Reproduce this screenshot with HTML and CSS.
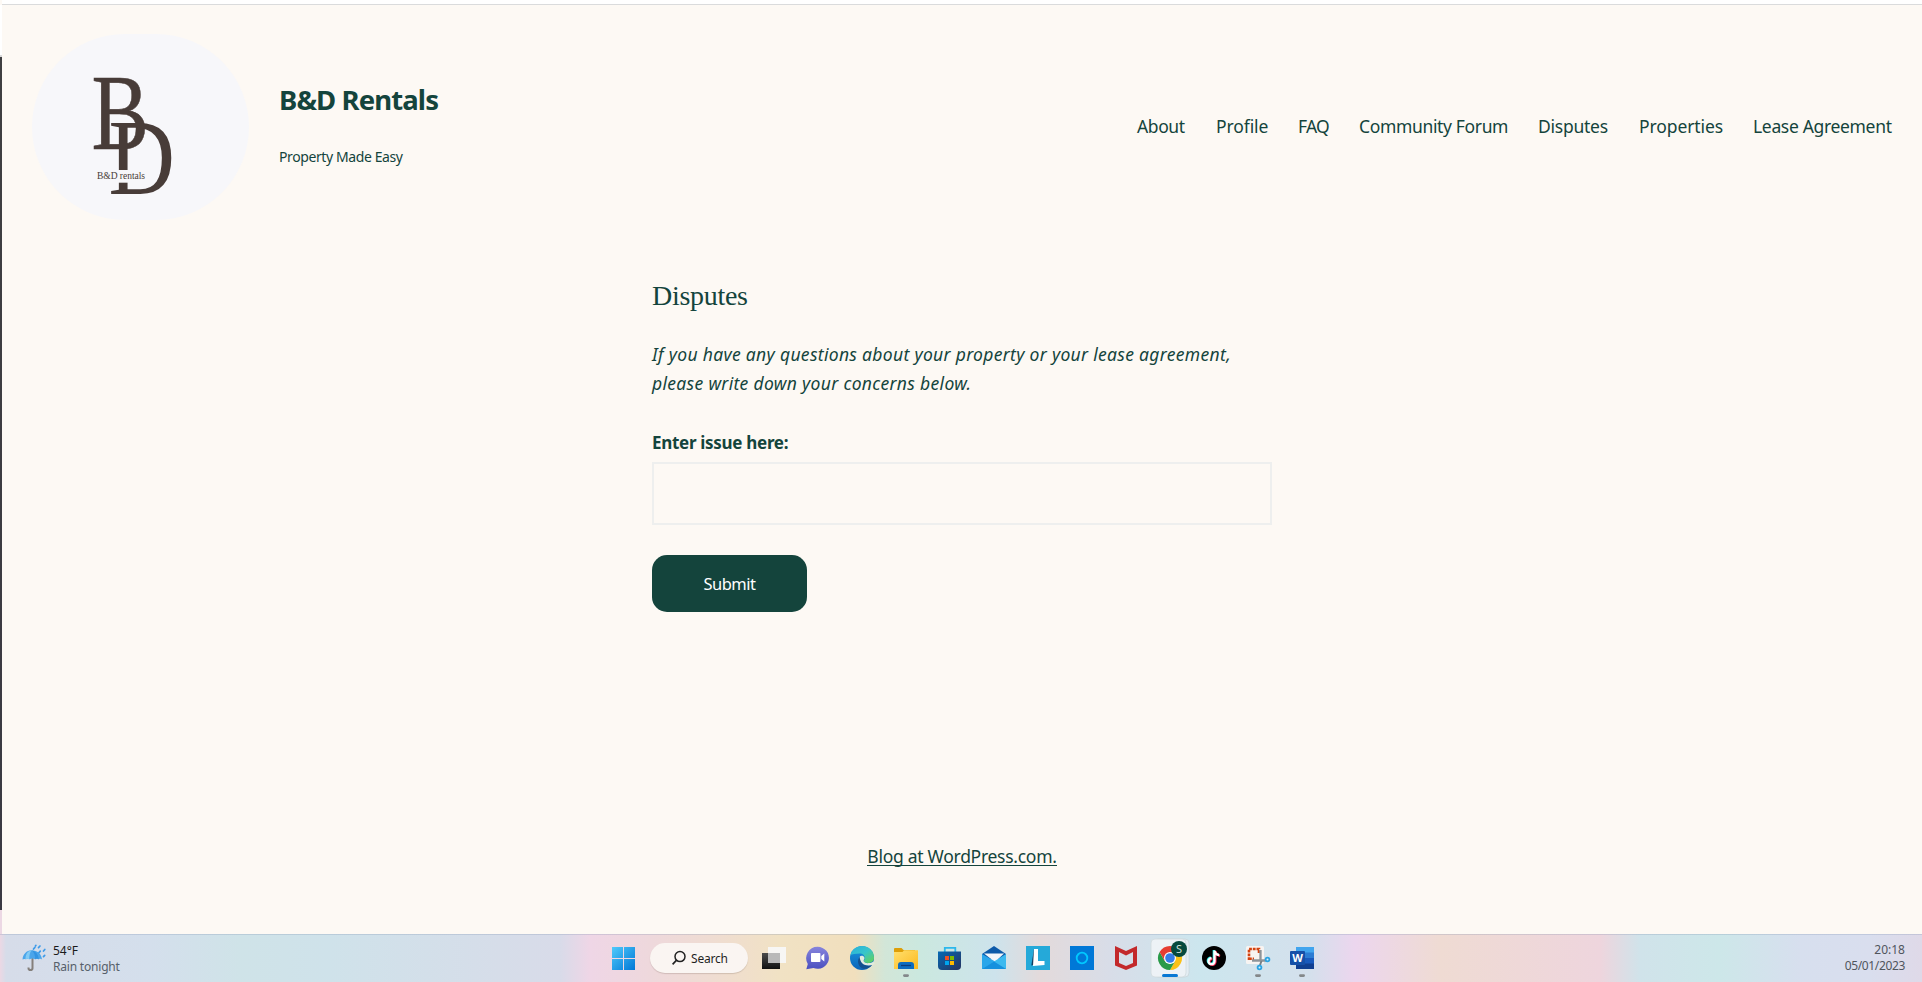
FILE: index.html
```html
<!DOCTYPE html>
<html lang="en">
<head>
<meta charset="utf-8">
<title>Disputes – B&amp;D Rentals</title>
<link rel="stylesheet" href="styles.css">
</head>
<body>
<div class="screen">
  <div class="top-edge"></div>
  <div class="middle">
    <div class="side-edge"></div>
    <div class="page">
      <header class="header">
        <div class="logo">
          <svg width="217" height="186" viewBox="32 34 217 186">
            <g class="logo-letters">
              <text transform="translate(91.500 148.500) scale(.79 1)" font-size="109" stroke="#483c38" stroke-width=".6">B</text>
              <text transform="translate(108.500 193.700) scale(.86 1)" font-size="107">D</text>
            </g>
            <rect x="96" y="170" width="52" height="12.700" fill="#f7f7fa"/>
            <text x="97" y="179.400" font-size="9.500" textLength="48">B&amp;D rentals</text>
          </svg>
        </div>
        <div class="identity">
          <h1 class="site-title">B&amp;D Rentals</h1>
          <p class="tagline">Property Made Easy</p>
        </div>
        <nav class="nav">
          <a class="n1">About</a><a class="n2">Profile</a><a class="n3">FAQ</a><a class="n4">Community Forum</a><a class="n5">Disputes</a><a class="n6">Properties</a><a class="n7">Lease Agreement</a>
        </nav>
      </header>
      <main class="content">
        <h2 class="heading">Disputes</h2>
        <p class="intro">If you have any questions about your property or your lease agreement,<br>please write down your concerns below.</p>
        <label class="label">Enter issue here:</label>
        <div class="field"></div>
        <button class="submit">Submit</button>
      </main>
      <footer class="footer"><a class="blog">Blog at WordPress.com.</a></footer>
    </div>
  </div>
  <div class="taskbar">
    <div class="weather">
      <svg width="26" height="28" viewBox="21 944 26 28">
        <path d="M32.5 958v11.2q0 1.800-2 1.800t-2-1.800v-.7" fill="none" stroke="#85807c" stroke-width="2"/>
        <path d="M22.500 960.500c.5-5.500 4-9 9-9.300 5.800.1 10 3.500 10.500 9.300-1-.8-2-.8-3.200-.2-1.200-.8-2.600-.8-3.600 0-1.800-1-3.800-1-5.600 0-1.200-.8-2.600-.8-3.800 0-1.200-.6-2.200-.5-3.300.2z" fill="#4ba5ea"/>
        <path d="M29.300 960.300q-.2-6 2.200-9.100-6 1.200-6.100 9.100l1.900-.5z" fill="#82cbf5"/>
        <path d="M35.200 960.300q0-6-3.400-9.100 6.200 1.600 7 9.100l-1.800-.7z" fill="#3394e2"/>
        <path d="M33.500 950l1.400-1.600M38.500 948.600l1.500-1.600M39 953.600l1.300-1.500M43.500 952l1.300-1.500M43.500 957.600l1.200-1.300M35.500 946.800l.4-.4" stroke="#3d9be9" stroke-width="1.700" stroke-linecap="round"/>
      </svg>
      <div class="weather-text"><span>54°F</span><span class="cond">Rain tonight</span></div>
    </div>
    <div class="apps">
      <svg width="44" height="48" viewBox="0 0 44 48">
        <defs>
          <linearGradient id="win" x1="0" y1="0" x2="1" y2="1"><stop offset="0" stop-color="#4fcafb"/><stop offset="1" stop-color="#0177d6"/></linearGradient>
          <linearGradient id="dark" x1="0" y1="0" x2="0" y2="1"><stop offset="0" stop-color="#4b4b4b"/><stop offset="1" stop-color="#111"/></linearGradient>
          <linearGradient id="chat" x1="0" y1="0" x2="0" y2="1"><stop offset="0" stop-color="#8784dc"/><stop offset="1" stop-color="#4a4fc0"/></linearGradient>
          <linearGradient id="edgeA" x1="0" y1="0" x2="1" y2="1"><stop offset="0" stop-color="#27b0dd"/><stop offset=".5" stop-color="#38c5cb"/><stop offset="1" stop-color="#69d24b"/></linearGradient>
          <linearGradient id="edgeB" x1="0" y1="0" x2="0" y2="1"><stop offset="0" stop-color="#1a98e0"/><stop offset="1" stop-color="#0b63b8"/></linearGradient>
          <linearGradient id="folder" x1="0" y1="0" x2="1" y2="1"><stop offset="0" stop-color="#ffdf6d"/><stop offset="1" stop-color="#fcb91f"/></linearGradient>
          <linearGradient id="store" x1="0" y1="0" x2="1" y2="1"><stop offset="0" stop-color="#0669b4"/><stop offset="1" stop-color="#263360"/></linearGradient>
        </defs>
        <path d="M11 13h11v11H11zM23 13h11v11H23zM11 25h11v11H11zM23 25h11v11H23z" fill="url(#win)"/>
      </svg>
      <div class="search">
        <svg width="16" height="16" viewBox="0 0 16 16"><circle cx="9" cy="6.600" r="5" fill="none" stroke="#222" stroke-width="1.500"/><path d="M5.600 10.200L1.600 14.300" stroke="#222" stroke-width="1.700"/></svg>
        <span>Search</span>
      </div>
      <svg width="44" height="48" viewBox="0 0 44 48"><rect x="10" y="19" width="18" height="16" fill="url(#dark)"/><rect x="16" y="13" width="18" height="16" fill="#f7f7f7" fill-opacity=".95"/><path d="M16 19h12v10H16z" fill="#b9b9b9"/></svg>
      <svg width="44" height="48" viewBox="0 0 44 48"><path d="M21.700 12.800a11.300 11 0 1 1-4.300 21.200L10.300 35.200l1.500-5.300A11.300 11.300 0 0 1 21.700 12.800z" fill="url(#chat)"/><rect x="15" y="19" width="9.400" height="9" rx=".8" fill="#fff"/><path d="M25.300 22l3-2.600v8.200l-3-2.600z" fill="#fff"/></svg>
      <svg width="44" height="48" viewBox="0 0 44 48"><circle cx="22" cy="24" r="12" fill="url(#edgeB)"/><path d="M10.400 21C12 15.500 16.500 12 22 12c7 0 12 5.300 12 11.500 0 4-3 5.500-6.200 5.500-2.300 0-4-.8-4-2 0-.8 1-1.200 1-3 0-2.400-2-4.500-5.300-4.500-4 0-7.600 1-9.100 1.500z" fill="url(#edgeA)"/><path d="M20.500 22.200c-3.500 2.600-3.500 9 1.500 12 3.200 1.800 7.800-.3 10.300-3.500-2.800 1.400-7 1.200-9.300-1-2-1.800-2.700-4.500-2.500-7.500z" fill="#14508f"/><path d="M19.800 22.500c.8-1.200 4.300-1 4.700 1.400.1 1.300-1.300 1.900-.8 3.300.5 1.500 3 2.100 5 1.900 2 .1 4-.8 4.800-1.600L34.500 30l-2 1c-3 .8-7.500.8-10-1.500-2-1.800-3-5-2.700-7z" fill="#e2ebde"/></svg>
      <svg width="44" height="48" viewBox="0 0 44 48"><path d="M10 15q0-1 1-1h6.500l2 2H31v4H10z" fill="#dd9e08"/><path d="M10 18h8.500l1.500-1.700h14V35H10z" fill="url(#folder)"/><path d="M14 35v-4q0-3 3-3h10q3 0 3 3v4z" fill="#0c6cc0"/><path d="M17 31.500h10" stroke="#0a3c7c" stroke-width="1.300"/><rect class="dot" x="19" y="40.200" width="6" height="2.800" rx="1.400"/></svg>
      <svg width="44" height="48" viewBox="0 0 44 48"><path d="M16.800 18v-4.200h10.500V18" fill="none" stroke="#2bb8ec" stroke-width="1.800"/><path d="M10 17.500h23V32q0 4-4 4H14q-4 0-4-4z" fill="url(#store)"/><path d="M17 22h4v4h-4z" fill="#f25022"/><path d="M22 22h4v4h-4z" fill="#7fba00"/><path d="M17 27h4v4h-4z" fill="#00a4ef"/><path d="M22 27h4v4h-4z" fill="#ffb900"/></svg>
      <svg width="44" height="48" viewBox="0 0 44 48"><path d="M10 20l12-8 12 8v5H10z" fill="#0d5aa9"/><path d="M12 19.500h20l-9 8.500z" fill="#f3f6fa"/><path d="M10 20l14 8-5 7h-9z" fill="#2aa6ea"/><path d="M34 20v15H10z" fill="#3cb9ef"/><path d="M22 27.500L34 35H10z" fill="#1690de"/></svg>
      <svg width="44" height="48" viewBox="0 0 44 48"><path d="M10 12h24v24H10z" fill="#25a9d9"/><path d="M18 15l-2.700 16.500 4.700-1.500z" fill="#123c5e"/><path d="M18 15h4v12h6.500v4L17 32z" fill="#fff"/></svg>
      <svg width="44" height="48" viewBox="0 0 44 48"><path d="M10 12h24v24H10z" fill="#0078d7"/><circle cx="22" cy="24" r="5.300" fill="none" stroke="#00c8ff" stroke-width="1.800"/></svg>
      <svg width="44" height="48" viewBox="0 0 44 48"><path d="M11 12l11 5 11-5v19.500L22 36l-11-4.500zM15 18v11l7 3 7-3V18l-7 3.500z" fill="#c3292b" fill-rule="evenodd"/></svg>
      <div class="slot">
        <svg width="44" height="48" viewBox="0 0 44 48"><rect x="6" y="5" width="35" height="38" rx="4" fill="#e3edf3" stroke="#c9d5da" stroke-width=".8"/><rect x="3" y="5" width="35" height="38" rx="4" fill="#edf2f6" stroke="#d0dade" stroke-width=".8"/>
        <path d="M22 18H32.400A12 12 0 0 1 22 36L27.200 27z" fill="#fbc116"/><path d="M22 36A12 12 0 0 1 11.600 18l5.200 9L22 30l5.200-3z" fill="#299a49"/><path d="M11.600 18l5.200 9L22 18h10.400A12 12 0 0 0 11.600 18z" fill="#e63d32"/><circle cx="22" cy="24" r="6" fill="#fff"/><circle cx="22" cy="24" r="4.800" fill="#367de8"/>
        <circle cx="31" cy="15" r="8" fill="#07493d"/><rect x="14" y="40" width="16" height="3" rx="1.500" fill="#0878d4"/></svg>
        <span class="badge">S</span>
      </div>
      <svg width="44" height="48" viewBox="0 0 44 48"><circle cx="22" cy="24" r="12" fill="#000"/><g fill="none" stroke-width="2.300"><path d="M22.500 16.500v10.700a3 3 0 1 1-3-3M22.500 17q.8 3.700 4.700 4.200" stroke="#25f4ee" transform="translate(-.7 -.5)"/><path d="M22.500 16.500v10.700a3 3 0 1 1-3-3M22.500 17q.8 3.700 4.700 4.200" stroke="#fe2c55" transform="translate(.9 .6)"/><path d="M22.500 16.500v10.700a3 3 0 1 1-3-3M22.500 17q.8 3.700 4.700 4.200" stroke="#fff"/></g></svg>
      <svg width="44" height="48" viewBox="0 0 44 48"><rect x="10" y="12" width="18" height="18" rx="1.500" fill="#f7f4f2"/><path d="M13 26V15h10v5M13 24.800h5" fill="none" stroke="#d4420f" stroke-width="2.600" stroke-dasharray="2.800 .9"/><path d="M24.500 16v11M16 26.500h14" stroke="#8d9499" stroke-width="2.300"/><path d="M25.500 27l-1.500 4" stroke="#777f84" stroke-width="2"/><circle cx="31.500" cy="25.500" r="1.900" fill="#d6eefb" stroke="#2aa3e2" stroke-width="1.800"/><circle cx="23.500" cy="33.500" r="1.900" fill="#d6eefb" stroke="#2aa3e2" stroke-width="1.800"/><rect class="dot" x="19" y="40.200" width="6" height="2.800" rx="1.400"/></svg>
      <div class="slot">
        <svg width="44" height="48" viewBox="0 0 44 48"><path d="M16 13h18v6H16z" fill="#41a5ee"/><path d="M16 18.500h18v6H16z" fill="#2b7cd3"/><path d="M16 24h18v6H16z" fill="#185abd"/><path d="M16 29.500h18V35H16z" fill="#103f91"/><rect x="10" y="17" width="15" height="14" rx="1" fill="#1550a8"/><rect class="dot" x="19" y="40.200" width="6" height="2.800" rx="1.400"/></svg>
        <span class="word-letter">W</span>
      </div>
    </div>
    <div class="clock"><span>20:18</span><span class="date">05/01/2023</span></div>
  </div>
</div>
</body>
</html>
```
FILE: styles.css
```css
* { box-sizing: border-box; }
body { margin: 0; background: #fdf9f4; font-family: "Noto Sans", sans-serif; color: #14443c; }
.screen { width: 1922px; height: 982px; display: flex; flex-direction: column; overflow: hidden; }
.top-edge { height: 5px; flex: none; background: #fff; border-bottom: 1px solid #dadbdc; margin-left: 2px; }
.middle { height: 929px; flex: none; display: flex; }
.side-edge { width: 2px; background: linear-gradient(#fff 0 50px, #dadada 50px 52px, #3f3f41 52px, #3a3942 905px, #ecd8e4 905px); }
.page { flex: 1; display: flex; flex-direction: column; }
.header { height: 245px; padding: 29px 30px 0 30px; display: flex; }
.logo { width: 217px; height: 186px; border-radius: 93px; background: #f7f7fa; overflow: hidden; }
.logo svg { display: block; }
.logo text { font-family: "Liberation Serif", serif; fill: #483c38; }
.identity { margin-left: 30px; padding-top: 44px; }
.site-title { margin: 0; font-size: 27.500px; line-height: 44px; font-weight: 700; white-space: nowrap; letter-spacing: -.9px; }
.tagline { margin: 23px 0 0; font-size: 14px; line-height: 24px; white-space: nowrap; letter-spacing: -.4px; }
.nav { margin-left: auto; padding-top: 77px; display: flex; gap: 30px; font-size: 17.500px; line-height: 30px; white-space: nowrap; }
.n1 { width: 49px; letter-spacing: -.4px; }
.n2 { width: 52px; letter-spacing: -.1px; }
.n3 { width: 31px; letter-spacing: -.8px; }
.n4 { width: 149px; letter-spacing: -.35px; }
.n5 { width: 71px; letter-spacing: -.25px; }
.n6 { width: 84px; letter-spacing: -.1px; }
.n7 { width: 139px; letter-spacing: -.33px; }
.content { width: 620px; margin-left: 650px; display: flex; flex-direction: column; align-items: flex-start; }
.heading { margin: 26px 0 0; font: 400 28px/40px "Liberation Serif", serif; letter-spacing: -.3px; }
.intro { margin: 24px 0 0; font-size: 17.500px; line-height: 29px; font-style: italic; white-space: nowrap; letter-spacing: .32px; }
.label { margin-top: 30px; font-size: 17px; line-height: 29px; font-weight: 700; white-space: nowrap; letter-spacing: -.3px; }
.field { margin-top: 5px; width: 620px; height: 63px; border: 2px solid #eeefee; }
.submit { margin-top: 30px; width: 155px; height: 57px; border: 0; border-radius: 15px; background: #14443c; color: #fff; font: 16.500px/24px "Noto Sans", sans-serif; letter-spacing: -.5px; padding: 0; }
.footer { margin-top: 232px; display: flex; justify-content: center; }
.blog { font-size: 17.500px; line-height: 25px; height: 22px; border-bottom: 1px solid #14443c; white-space: nowrap; letter-spacing: -.28px; }
.taskbar { height: 48px; flex: none; display: flex; border-top: 1px solid rgba(120, 140, 170, .25); background: linear-gradient(90deg, #ecd8e4 0, #d6dce9 6px, #d4dfec 150px, #cfe3e8 240px, #cfe2ea 330px, #d6dde9 500px, #d8dbe9 560px, #efd6e6 590px, #eed8dc 650px, #efdcd2 710px, #f1e2c4 780px, #f1dfbd 855px, #d2e6d8 885px, #cbe8df 920px, #cde3ec 995px, #e3dadb 1040px, #d8dde8 1110px, #cce6ee 1200px, #d4e0ec 1310px, #ecd6ee 1355px, #efdbd3 1440px, #eed5dd 1600px, #d0e3ea 1640px, #cde7e9 1720px, #d7dfee 1800px, #d9deee 1870px, #dfd9e8 1922px); }
.weather { width: 601px; padding: 8px 0 0 21px; display: flex; gap: 6px; }
.weather-text { display: flex; flex-direction: column; font-size: 12px; line-height: 16px; color: #1a1a1a; }
.weather-text .cond { color: #57606a; letter-spacing: -.2px; }
.apps { display: flex; margin-top: -1px; }
.search { width: 98px; height: 30px; margin: 9px 4px 0 5px; border-radius: 15px; background: #faf5f2; box-shadow: 0 1px 1px rgba(90, 70, 60, .2); display: flex; align-items: center; padding-left: 21px; gap: 4px; font-size: 12px; letter-spacing: -.2px; color: #1f1f1f; }
.dot { fill: #84888a; }
.slot { position: relative; width: 44px; height: 48px; }
.badge { position: absolute; left: 23px; top: 7px; width: 16px; font: 11px/16px "Noto Sans", sans-serif; text-align: center; color: #cfe0dc; }
.word-letter { position: absolute; left: 10px; top: 17px; width: 15px; font: 700 11px/14px "Noto Sans", sans-serif; text-align: center; color: #fff; }
.clock { margin-left: auto; padding: 7px 17px 0 0; display: flex; flex-direction: column; align-items: flex-end; font-size: 12px; line-height: 16px; color: #50555d; }
.date { letter-spacing: -.35px; }
```
